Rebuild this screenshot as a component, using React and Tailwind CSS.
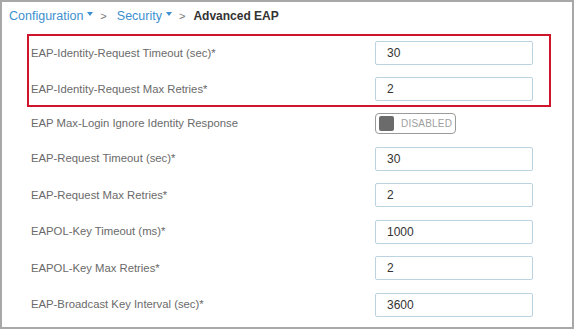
import React from 'react';

const font = { fontFamily: '"Liberation Sans", Arial, sans-serif' };

const rows = [
  { label: 'EAP Max-Login Ignore Identity Response', toggle: true },
  { label: 'EAP-Request Timeout (sec)*', value: '30' },
  { label: 'EAP-Request Max Retries*', value: '2' },
  { label: 'EAPOL-Key Timeout (ms)*', value: '1000' },
  { label: 'EAPOL-Key Max Retries*', value: '2' },
  { label: 'EAP-Broadcast Key Interval (sec)*', value: '3600' },
];

function Caret() {
  return (
    <svg width="6" height="4" viewBox="0 0 6 4" className="ml-[4px] -mt-[5px]">
      <path d="M0 0 L6 0 L3 4 Z" fill="#3d8fd0" />
    </svg>
  );
}

function Field({ value }) {
  return (
    <div className="w-[158px] h-[24px] border border-[#bcd3e1] rounded-[2px] flex items-center pl-[11px] text-[12px] text-[#333]">
      {value}
    </div>
  );
}

function Row({ label, value, toggle }) {
  return (
    <div className="flex items-center">
      <div className="w-[344px] text-[11.3px] text-[#6a6a6a]">{label}</div>
      {toggle ? (
        <div className="w-[81px] h-[21px] border border-[#9a9a9a] rounded-[4px] flex items-center pl-[3px] gap-[7px]">
          <div className="w-[15px] h-[15px] bg-[#6b6b6b] rounded-[2px]" />
          <span className="text-[10px] text-[#a0a0a0] tracking-[0.2px]">DISABLED</span>
        </div>
      ) : (
        <Field value={value} />
      )}
    </div>
  );
}

export default function App() {
  return (
    <div style={font} className="w-[574px] h-[329px] border-2 border-[#a8a8a8] bg-white overflow-hidden">
      <div className="flex items-center h-[20px] mt-[4px] pl-[7px] text-[12.5px]">
        <span className="text-[#3d8fd0]">Configuration</span>
        <Caret />
        <span className="text-[#777] ml-[7px] text-[11px]">&gt;</span>
        <span className="text-[#3d8fd0] ml-[10px]">Security</span>
        <Caret />
        <span className="text-[#777] ml-[7px] text-[11px]">&gt;</span>
        <span className="text-[#333] ml-[8px] text-[12px] font-semibold">Advanced EAP</span>
      </div>

      <div className="ml-[25px] mt-[8px] w-[524px]">
        <div className="border-2 border-[#d0142c] pt-[5px] pb-[4px] pl-[2px] flex flex-col gap-[12px]">
          <Row label="EAP-Identity-Request Timeout (sec)*" value="30" />
          <Row label="EAP-Identity-Request Max Retries*" value="2" />
        </div>
        <div className="pl-[4px] mt-[6px] flex flex-col gap-[12.5px]">
          {rows.map((r) => (
            <Row key={r.label} {...r} />
          ))}
        </div>
      </div>
    </div>
  );
}
